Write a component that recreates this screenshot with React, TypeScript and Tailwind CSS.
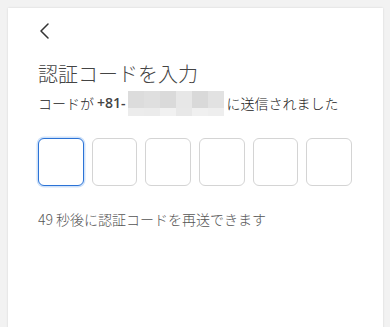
import React from "react";

const row1 = ["#dcdcdc", "#dfdfdf", "#dadada", "#e7e7e7", "#d9d9d9", "#e2e2e2"];
const row2 = ["#ececec", "#ebebeb", "#f1f1f1", "#e8e8e8", "#f0f0f0", "#eeeeee"];

export default function App() {
  return (
    <div
      className="h-[327px] w-[390px] overflow-hidden bg-[#f2f2f2] pl-[8px] pt-[8px]"
      style={{ fontFamily: '"Noto Sans CJK JP", "Noto Sans", sans-serif' }}
    >
      <div className="h-[340px] w-[375px] bg-white px-[30px] pt-[14px] shadow-[0_0_2px_rgba(0,0,0,0.12)]">
        <button className="flex h-[18px] w-[16px] items-center justify-start">
          <svg width="12" height="16" viewBox="0 0 12 16" fill="none">
            <path d="M10 1 L3 8 L10 15" stroke="#333" strokeWidth="1.5" strokeLinecap="round" strokeLinejoin="round" />
          </svg>
        </button>
        <h1 className="mt-[20px] text-[20px] leading-[28px] font-light text-[#444]">認証コードを入力</h1>
        <div className="mt-[2px] flex h-[26px] items-center text-[14px] leading-[20px] font-light text-[#222]">
          <span>コードが</span>
          <span className="ml-[3px] font-semibold text-[#444]" style={{ fontFamily: '"Open Sans", "Noto Sans", sans-serif' }}>
            +81-
          </span>
          <span className="ml-[2px] flex h-[25px] flex-col">
            <span className="flex">
              {row1.map((c, i) => (
                <span key={i} className="h-[17px] w-[16px]" style={{ backgroundColor: c }} />
              ))}
            </span>
            <span className="flex">
              {row2.map((c, i) => (
                <span key={i} className="h-[8px] w-[16px]" style={{ backgroundColor: c }} />
              ))}
            </span>
          </span>
          <span className="ml-[3px]">に送信されました</span>
        </div>
        <div className="mt-[22px] flex w-[314px] gap-[8px]">
          {[0, 1, 2, 3, 4, 5].map((i) => (
            <input
              key={i}
              className={
                i === 0
                  ? "h-[48px] w-[46px] min-w-0 flex-1 rounded-[6px] border border-[#2b73d6] bg-white shadow-[0_0_0_1.5px_#cfe2fa] outline-none"
                  : "h-[48px] w-[46px] min-w-0 flex-1 rounded-[6px] border border-[#d4d4d4] bg-white outline-none"
              }
              maxLength={1}
            />
          ))}
        </div>
        <p className="mt-[23px] text-[14px] leading-[20px] font-light text-[#555]">49 秒後に認証コードを再送できます</p>
      </div>
    </div>
  );
}
